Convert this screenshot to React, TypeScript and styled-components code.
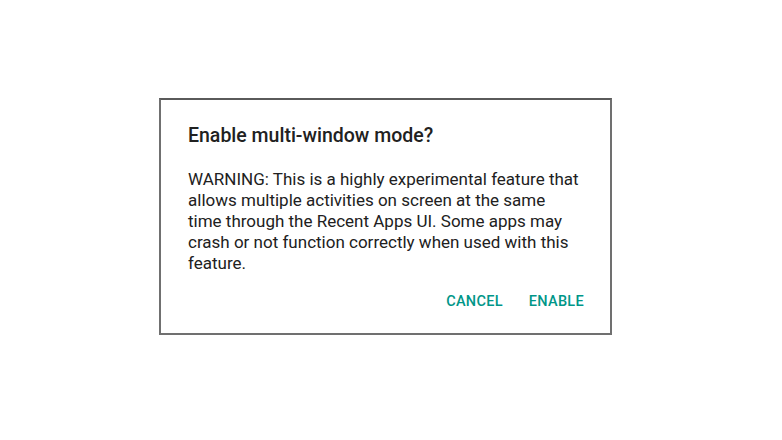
import styled, { createGlobalStyle } from 'styled-components';

const GlobalStyle = createGlobalStyle`
  html, body {
    margin: 0;
    padding: 0;
    background: #ffffff;
    font-family: Roboto, "Noto Sans", sans-serif;
  }
`;

const Page = styled.div`
  width: 782px;
  height: 440px;
  padding: 98px 0 0 159px;
  box-sizing: border-box;
`;

const Dialog = styled.div`
  width: 453px;
  height: 237px;
  box-sizing: border-box;
  background: #fff;
  border: 2px solid #707070;
  border-top-color: #5a5a5a;
  padding: 22px 22px 0 27px;
  display: flex;
  flex-direction: column;
`;

const Title = styled.h2`
  margin: 0;
  font-size: 19.5px;
  font-weight: 500;
  line-height: 28px;
  color: #212121;
`;

const Body = styled.p`
  margin: 19px 0 0;
  max-width: 392px;
  font-size: 17px;
  line-height: 21px;
  color: #212121;
`;

const Actions = styled.div`
  display: flex;
  justify-content: flex-end;
  gap: 26px;
  margin-top: 20px;
  padding-right: 4px;
`;

const ActionButton = styled.button`
  border: none;
  background: transparent;
  padding: 0;
  font-family: Roboto, "Noto Sans", sans-serif;
  font-size: 14.5px;
  line-height: 16px;
  font-weight: 500;
  letter-spacing: 0.3px;
  color: #009688;
  text-transform: uppercase;
  cursor: pointer;
`;

export default function App() {
  return (
    <>
      <GlobalStyle />
      <Page>
        <Dialog>
          <Title>Enable multi-window mode?</Title>
          <Body>
            WARNING: This is a highly experimental feature that allows multiple activities on screen at the same
            time through the Recent Apps UI. Some apps may crash or not function correctly when used with this
            feature.
          </Body>
          <Actions>
            <ActionButton>Cancel</ActionButton>
            <ActionButton>Enable</ActionButton>
          </Actions>
        </Dialog>
      </Page>
    </>
  );
}
